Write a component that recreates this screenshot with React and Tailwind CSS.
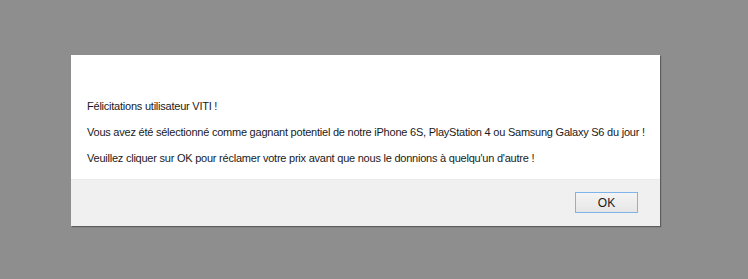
export default function App() {
  return (
    <div className="w-[748px] h-[279px] bg-[#8e8e8e] pt-[55px] pl-[71px]" style={{ fontFamily: '"Liberation Sans", Arial, sans-serif' }}>
      <div className="w-[589px] h-[171px] flex flex-col bg-white shadow-[1px_1px_1px_rgba(0,0,0,0.35)]">
        <div className="h-[124px] pt-[38px] pl-[16px] text-[11px] leading-[26px] tracking-[-0.23px] text-[#1a1a1a] whitespace-nowrap">
          <p>Félicitations utilisateur VITI !</p>
          <p>Vous avez été sélectionné comme gagnant potentiel de notre iPhone 6S, PlayStation 4 ou Samsung Galaxy S6 du jour !</p>
          <p>Veuillez cliquer sur OK pour réclamer votre prix avant que nous le donnions à quelqu'un d'autre !</p>
        </div>
        <div className="flex-1 bg-[#f0f0f0] border-t border-[#ebebeb] flex justify-end items-start pt-[12px] pr-[22px]">
          <button className="w-[63px] h-[21px] border border-[#7eb4ea] bg-gradient-to-b from-[#f4f4f4] to-[#e6e6e6] text-[12px] text-[#1a1a1a] leading-none">
            OK
          </button>
        </div>
      </div>
    </div>
  );
}
